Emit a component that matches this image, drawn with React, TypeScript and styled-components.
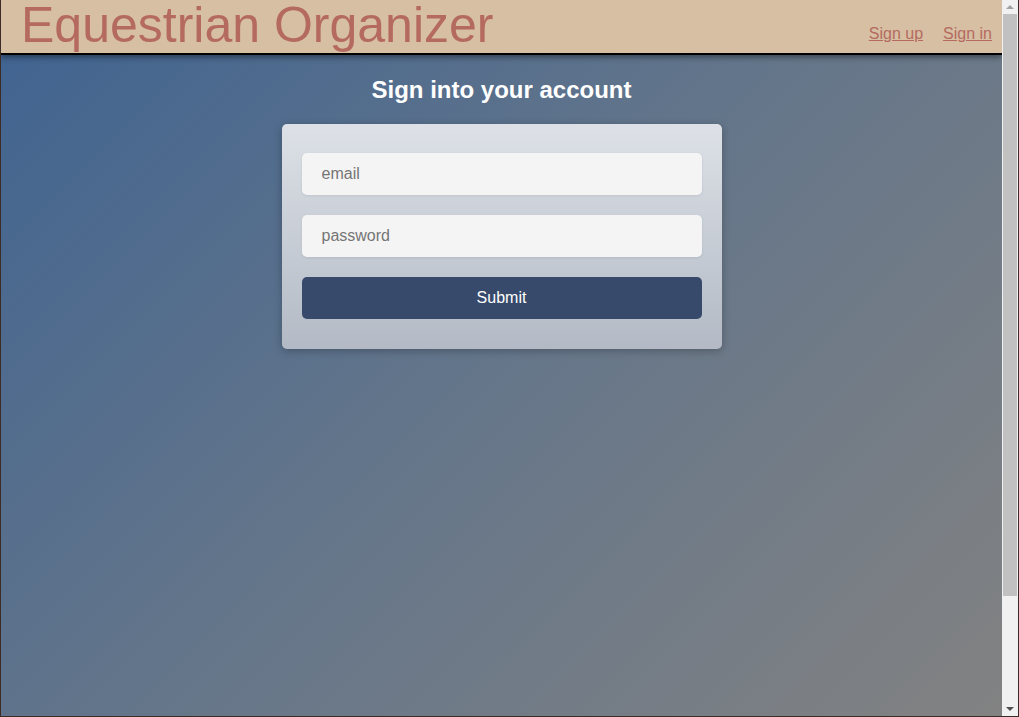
import React from "react";
import styled, { createGlobalStyle } from "styled-components";

const Global = createGlobalStyle`
  html, body { margin: 0; padding: 0; height: 100%; overflow: hidden; }
  body { font-family: "Liberation Sans", Arial, sans-serif; background: #3d2b26; }
  #root { height: 100%; }
`;

const Frame = styled.div`
  box-sizing: border-box;
  width: 100vw;
  height: 100vh;
  border-left: 1px solid #3d2b26;
  border-right: 1px solid #3d2b26;
  border-bottom: 1px solid #3d2b26;
  display: flex;
`;

const Viewport = styled.div`
  flex: 1;
  min-width: 0;
  height: 100%;
  overflow: hidden;
  background: linear-gradient(135deg, #3f6391 0%, #65768a 50%, #828282 100%);
  display: flex;
  flex-direction: column;
`;

const Rail = styled.div`
  width: 16px;
  height: 100%;
  background: #f1f1f1;
  display: flex;
  flex-direction: column;
`;

const Arrow = styled.div<{ $dir: "up" | "down"; $color: string }>`
  height: 14px;
  flex: none;
  display: flex;
  align-items: center;
  justify-content: center;
  &::after {
    content: "";
    width: 0;
    height: 0;
    border-left: 4px solid transparent;
    border-right: 4px solid transparent;
    ${(p) =>
      p.$dir === "up"
        ? `border-bottom: 4px solid ${p.$color};`
        : `border-top: 4px solid ${p.$color};`}
  }
`;

const Track = styled.div`
  flex: 1;
  display: flex;
  flex-direction: column;
`;

const Thumb = styled.div`
  margin: 0 1px;
  height: 582px;
  background: #c1c1c1;
`;

const Header = styled.header`
  box-sizing: border-box;
  height: 55px;
  flex: none;
  background: #d6bfa3;
  border-bottom: 2px solid #000;
  box-shadow: 0 2px 6px rgba(0, 0, 0, 0.45);
  display: flex;
  align-items: flex-start;
  justify-content: space-between;
  padding: 0 10px 0 20px;
  position: relative;
  z-index: 1;
`;

const Title = styled.h1`
  margin: 0;
  font-weight: normal;
  font-size: 50px;
  line-height: 50px;
  color: #b56a60;
  white-space: nowrap;
`;

const Nav = styled.nav`
  display: flex;
  gap: 20px;
  padding-top: 24px;
`;

const NavLink = styled.a`
  font-size: 16px;
  line-height: 20px;
  color: #b56a60;
  text-decoration: underline;
  cursor: pointer;
`;

const Main = styled.main`
  display: flex;
  flex-direction: column;
  align-items: center;
`;

const Heading = styled.h2`
  margin: 21px 0 20px;
  font-size: 24px;
  line-height: 28px;
  font-weight: bold;
  color: #fff;
`;

const Card = styled.form`
  box-sizing: border-box;
  width: 440px;
  padding: 29px 20px 30px;
  border-radius: 5px;
  background: linear-gradient(180deg, #dde1e7 0%, #b3bac5 100%);
  box-shadow: 0 2px 8px rgba(0, 0, 0, 0.25);
  display: flex;
  flex-direction: column;
  gap: 20px;
`;

const Input = styled.input`
  box-sizing: border-box;
  width: 100%;
  height: 42px;
  border: none;
  border-radius: 5px;
  background: #f4f4f4;
  padding: 0 20px;
  font-family: "Liberation Sans", Arial, sans-serif;
  font-size: 16px;
  color: #333;
  outline: none;
  box-shadow: 0 1px 3px rgba(0, 0, 0, 0.08);
  &::placeholder { color: #757575; }
`;

const Button = styled.button`
  height: 42px;
  border: none;
  border-radius: 5px;
  background: #374a6b;
  color: #fff;
  font-family: "Liberation Sans", Arial, sans-serif;
  font-size: 16px;
  cursor: pointer;
`;

export default function App() {
  return (
    <>
      <Global />
      <Frame>
        <Viewport>
          <Header>
            <Title>Equestrian Organizer</Title>
            <Nav>
              <NavLink>Sign up</NavLink>
              <NavLink>Sign in</NavLink>
            </Nav>
          </Header>
          <Main>
            <Heading>Sign into your account</Heading>
            <Card onSubmit={(e) => e.preventDefault()}>
              <Input type="email" placeholder="email" />
              <Input type="password" placeholder="password" />
              <Button type="submit">Submit</Button>
            </Card>
          </Main>
        </Viewport>
        <Rail aria-hidden="true">
          <Arrow $dir="up" $color="#a3a3a3" />
          <Track>
            <Thumb />
          </Track>
          <Arrow $dir="down" $color="#505050" />
        </Rail>
      </Frame>
    </>
  );
}
